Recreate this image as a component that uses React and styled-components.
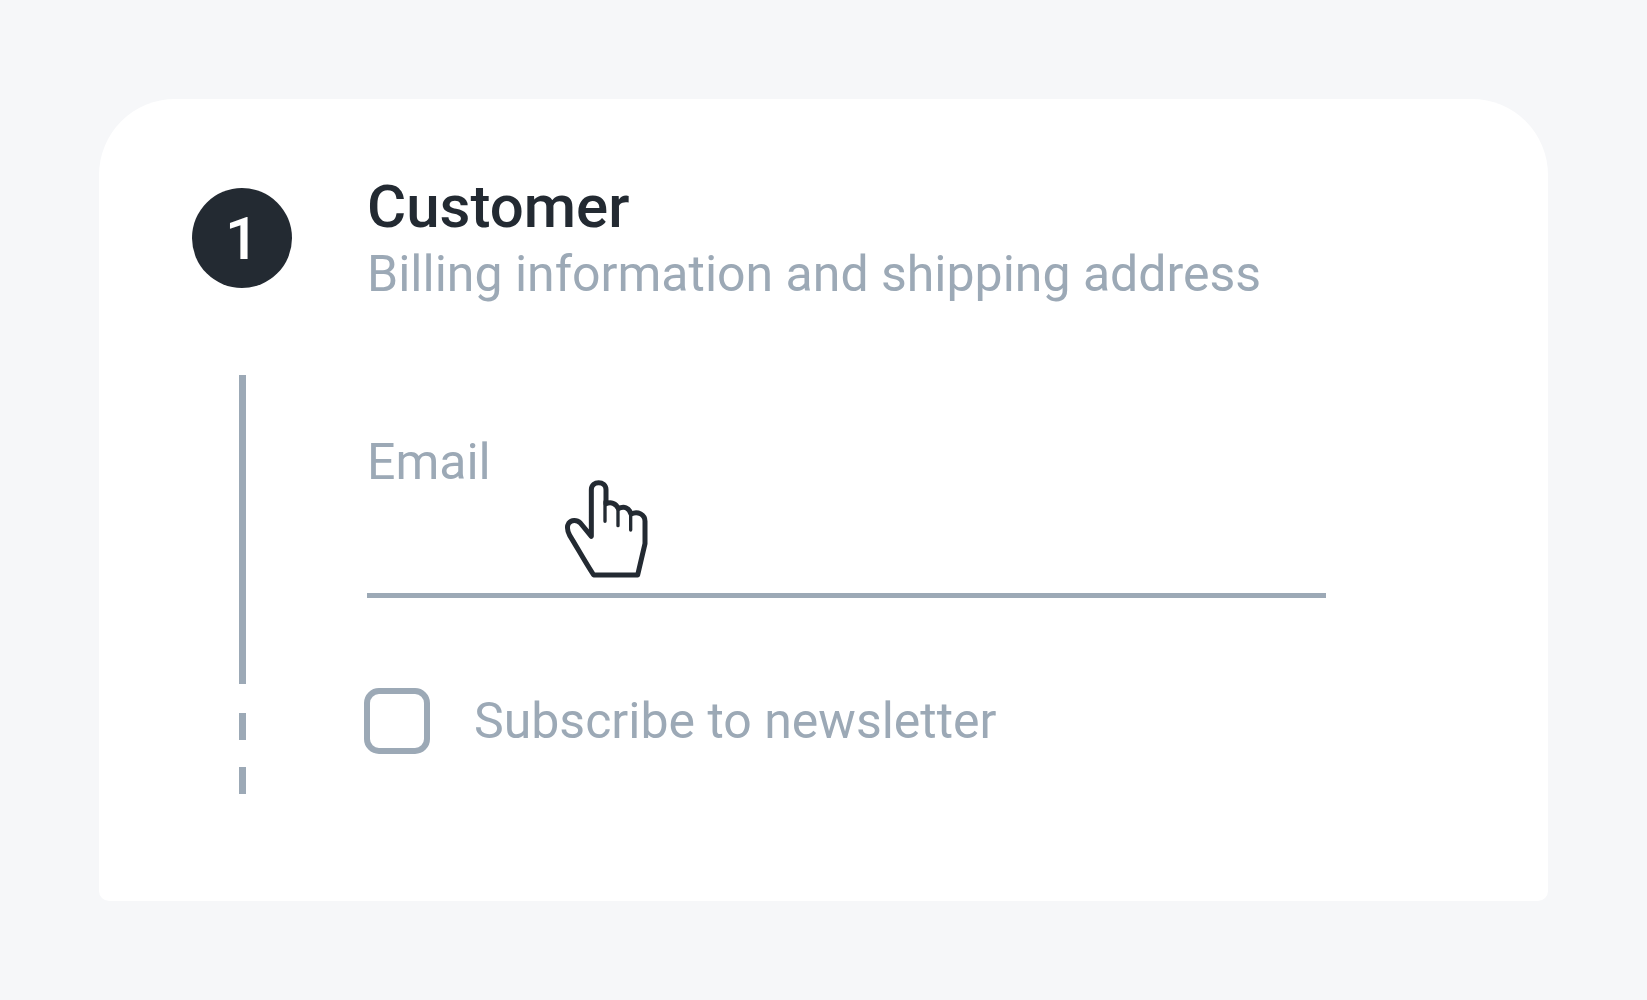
import React from "react";
import styled, { createGlobalStyle } from "styled-components";

const ink = "#232a32";
const muted = "#9ca9b6";

const Global = createGlobalStyle`
  *, *::before, *::after { box-sizing: border-box; }
  body { margin: 0; background: #f6f7f9; font-family: Roboto, "Liberation Sans", sans-serif; color: ${muted}; }
`;
const Page = styled.main`
  min-height: 100vh;
  padding: 99px;
`;
const Card = styled.section`
  background: #fff;
  border-radius: 76px 76px 10px 10px;
  padding: 74px 93px 107px;
  display: grid;
  grid-template-columns: 100px minmax(0, 1fr);
  column-gap: 75px;
`;
const Badge = styled.div`
  width: 100px;
  height: 100px;
  margin-top: 15px;
  border-radius: 50%;
  background: ${ink};
  color: #fff;
  font-size: 60px;
  font-weight: 500;
  line-height: 102px;
  text-align: center;
`;
const Header = styled.header`
  display: flex;
  flex-direction: column;
`;
const Title = styled.h1`
  margin: 0;
  color: ${ink};
  font-size: 60px;
  font-weight: 500;
  line-height: 68px;
`;
const Subtitle = styled.p`
  margin: 0;
  font-size: 50px;
  line-height: 66px;
`;
const Track = styled.div`
  display: flex;
  flex-direction: column;
  align-items: center;
  gap: 27px;
  padding-top: 68px;
`;
const Dash = styled.span`
  width: 7px;
  height: ${(p) => (p.$long ? 309 : 27)}px;
  margin-bottom: ${(p) => (p.$long ? 2 : 0)}px;
  background: ${muted};
`;
const Form = styled.form`
  display: flex;
  flex-direction: column;
  padding: 121px 129px 0 0;
`;
const Field = styled.div`
  position: relative;
  display: flex;
  flex-direction: column;
`;
const Label = styled.label`
  font-size: 50px;
  line-height: 68px;
`;
const Input = styled.input`
  width: 100%;
  height: 102px;
  padding: 0;
  border: 0;
  border-bottom: 5px solid ${muted};
  border-radius: 0;
  background: transparent;
  color: ${ink};
  font: inherit;
  font-size: 50px;
  outline: none;
`;
const Pointer = styled.svg`
  position: absolute;
  left: 183px;
  top: 37px;
  width: 110px;
  height: 130px;
  pointer-events: none;
`;
const Option = styled.div`
  display: flex;
  align-items: center;
  gap: 44px;
  margin: 89px 0 0 -3px;
`;
const Check = styled.input`
  appearance: none;
  flex: none;
  width: 66px;
  height: 66px;
  margin: 0;
  border: 6px solid ${muted};
  border-radius: 15px;
  background: #fff;
`;

export default function App() {
  return (
    <>
      <Global />
      <Page>
        <Card>
          <Badge>1</Badge>
          <Header>
            <Title>Customer</Title>
            <Subtitle>Billing information and shipping address</Subtitle>
          </Header>
          <Track aria-hidden="true">
            <Dash $long />
            <Dash />
            <Dash />
          </Track>
          <Form>
            <Field>
              <Label htmlFor="email">Email</Label>
              <Input id="email" type="email" />
              <Pointer viewBox="0 0 330 390" aria-hidden="true">
                <path
                  d="M131 330 C106 292 83 250 59 211 C52 197 50 184 56 175 C64 164 80 163 91 174 L124 214 V74 C124 46 168 46 168 74 V116 C182 110 198 114 205 131 C221 122 237 127 243 147 C264 137 285 149 285 169 V236 L263 330 Z"
                  fill="#fff"
                  stroke={ink}
                  strokeWidth="15"
                  strokeLinejoin="round"
                />
                <path
                  d="M165 110 V169 M204 128 V182 M242 144 V195"
                  fill="none"
                  stroke={ink}
                  strokeWidth="10"
                  strokeLinecap="round"
                />
              </Pointer>
            </Field>
            <Option>
              <Check id="news" type="checkbox" />
              <Label htmlFor="news">Subscribe to newsletter</Label>
            </Option>
          </Form>
        </Card>
      </Page>
    </>
  );
}
